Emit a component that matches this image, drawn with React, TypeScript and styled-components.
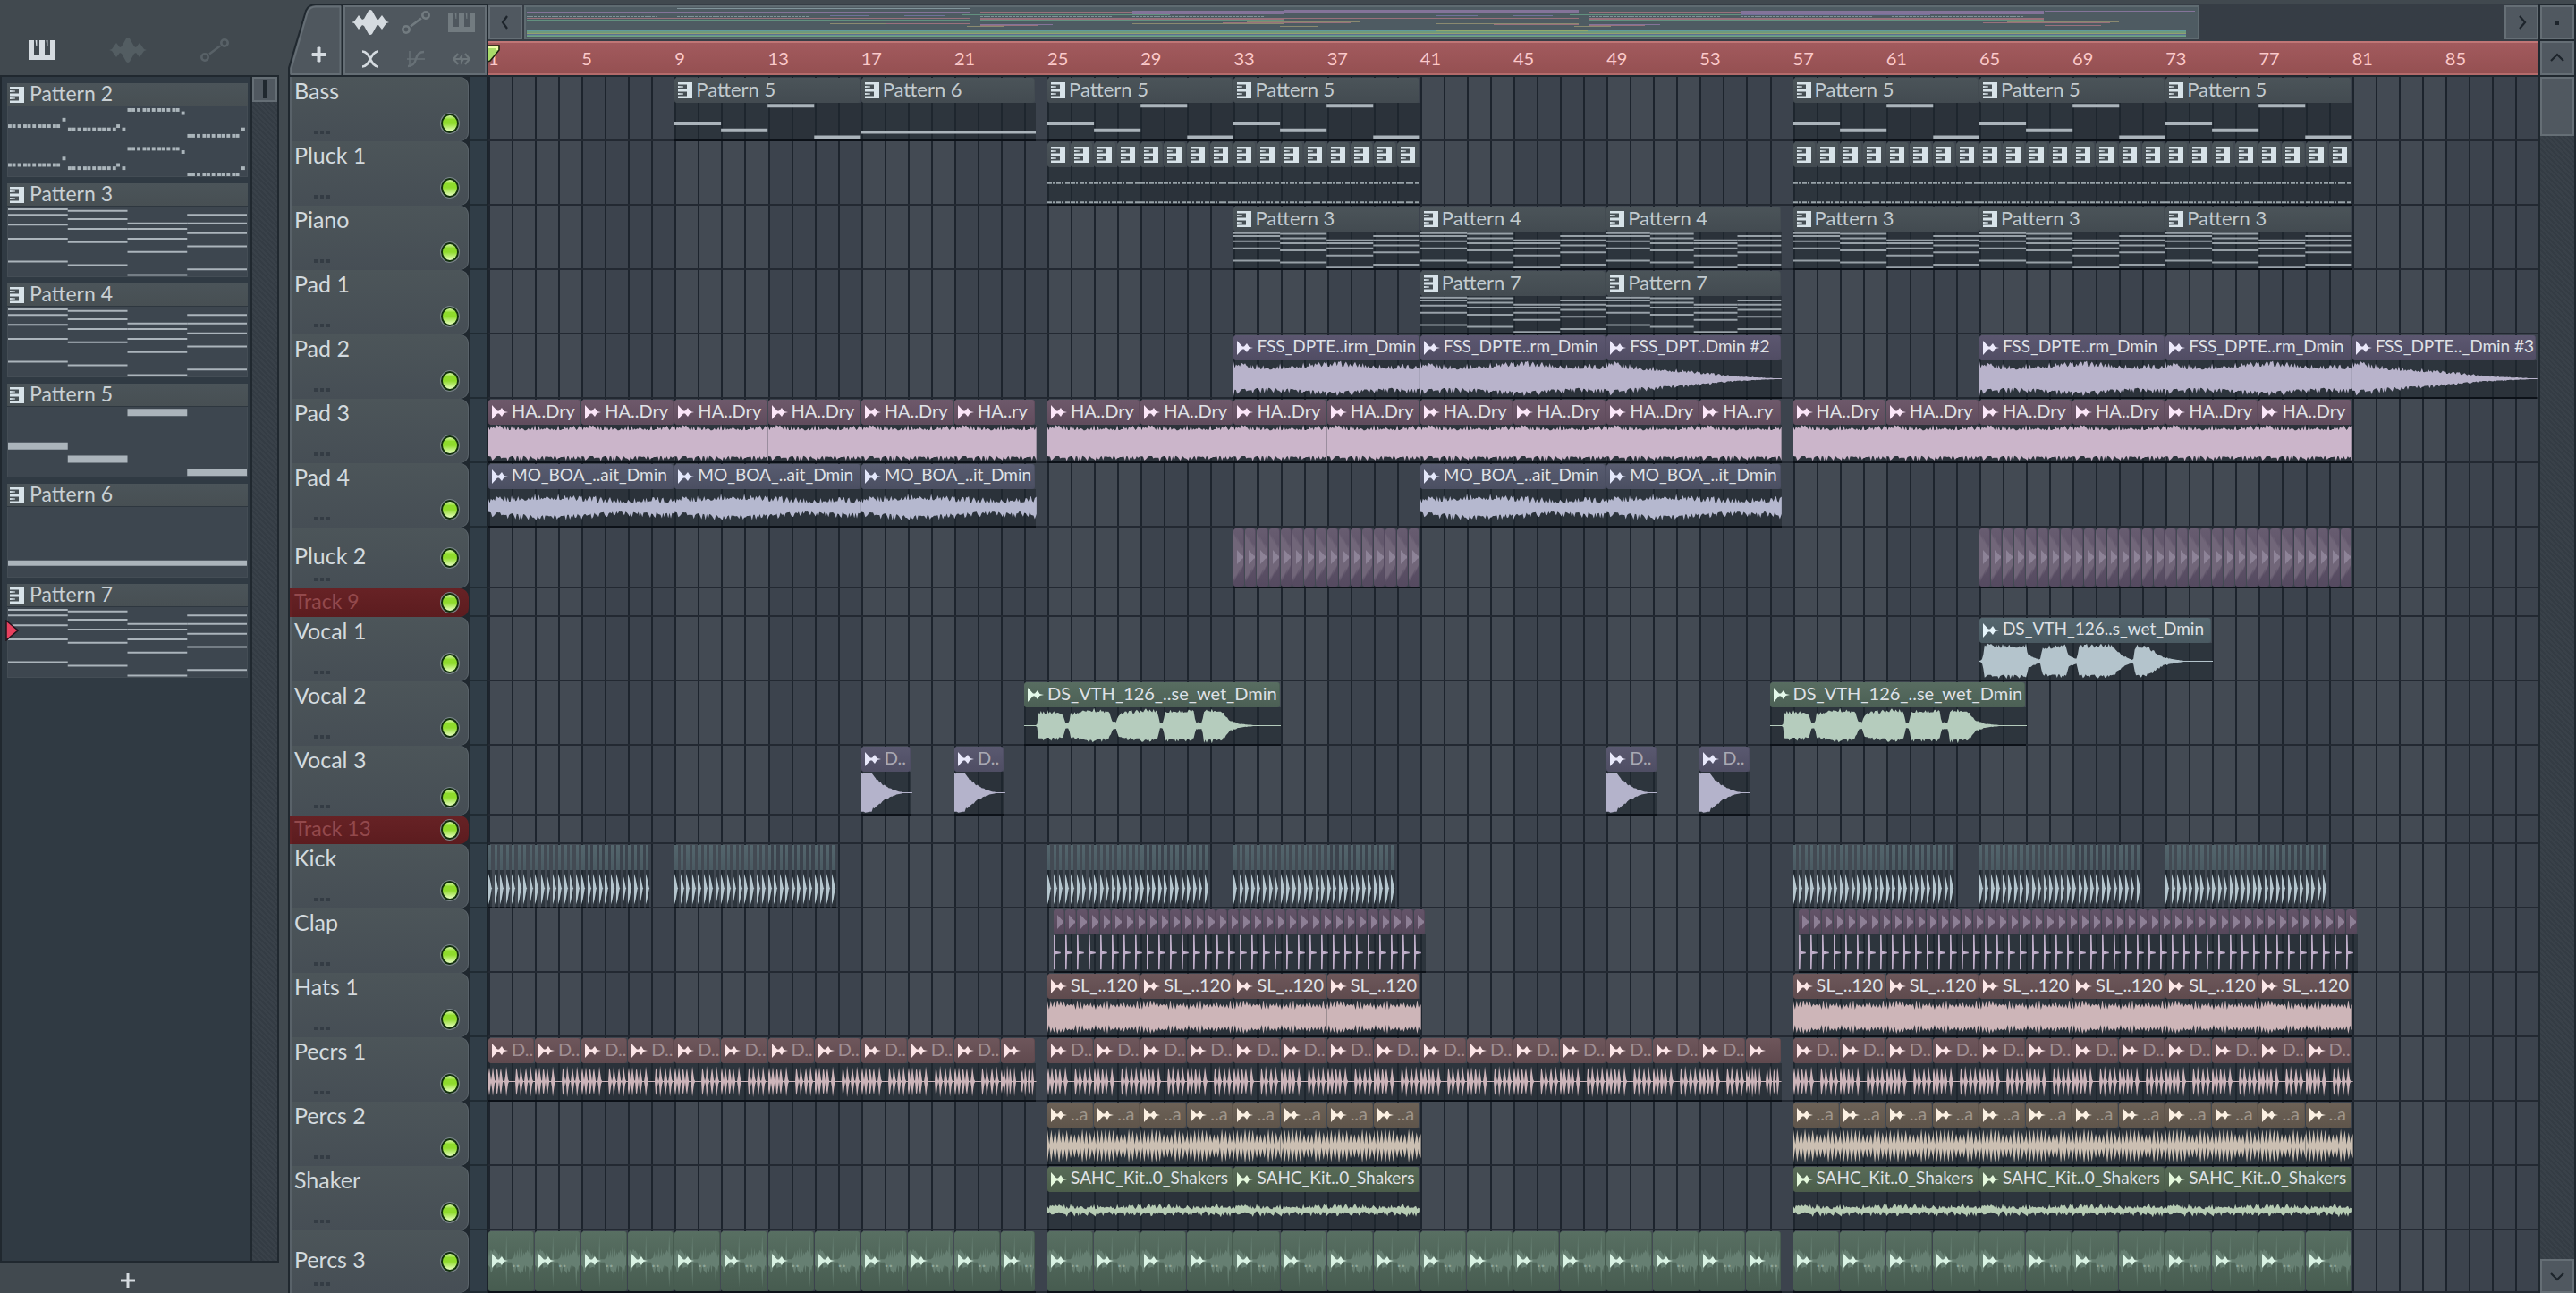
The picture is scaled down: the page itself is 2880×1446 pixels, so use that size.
import React from "react";
import styled, { createGlobalStyle, css } from "styled-components";

const BARS = 88;
const DIV = 12;
const COLS = BARS * DIV;

const Global = createGlobalStyle`
  *, *::before, *::after { box-sizing: border-box; }
  html, body, #root { margin: 0; height: 100%; }
  body {
    background: #20282f;
    font-family: Lato, "Open Sans", "Liberation Sans", sans-serif;
    color: #d3dade;
    overflow: hidden;
  }
  button { font: inherit; color: inherit; border: 0; padding: 0; background: none; }
`;

/* ---------- shared pieces ---------- */

const hatch = css`
  background: repeating-linear-gradient(45deg, #343c44 0 2px, #394149 2px 4px);
`;

const BevelButton = styled.button`
  flex: none;
  width: 38px;
  height: 38px;
  display: grid;
  place-items: center;
  background: #505860;
  border: 2px solid #656e75;
  color: #1d242b;
`;

const Chevron = ({ d }: { d: string }) => (
  <svg width="20" height="20" viewBox="0 0 20 20" fill="none" stroke="currentColor" strokeWidth="2.2">
    <path d={d} />
  </svg>
);

const WaveIcon = () => (
  <svg width="42" height="28" viewBox="0 0 42 28" fill="currentColor">
    <path d="M0 14 L3 13 L8 6 L12 11 L14 10 L19 1 Q21 -1 23 1 L28 10 L30 11 L34 6 L39 13 L42 14 L39 15 L34 22 L30 17 L28 18 L23 27 Q21 29 19 27 L14 18 L12 17 L8 22 L3 15 Z" />
  </svg>
);
const LinkIcon = () => (
  <svg width="32" height="26" viewBox="0 0 32 26" fill="none" stroke="currentColor" strokeWidth="2.6">
    <circle cx="5" cy="21" r="3.7" />
    <circle cx="27" cy="5" r="3.7" />
    <path d="M10 17.5 L22 8.5" />
  </svg>
);
const PianoIcon = () => (
  <svg width="30" height="22" viewBox="0 0 30 22" fill="currentColor">
    <path d="M0 0H6V16H12V0H18V16H24V0H30V22H0Z" />
    <path d="M7.600 0H9.400V7H8.400Z M19.600 0H21.400V7H20.400Z" />
  </svg>
);
const CrossIcon = () => (
  <svg width="20" height="20" viewBox="0 0 20 20" fill="none" stroke="currentColor" strokeWidth="2.600">
    <path d="M1 1.500 C6 1.500 8 6 10 10 C12 14 14 18.500 19 18.500 M19 1.500 C14 1.500 12 6 10 10 C8 14 6 18.500 1 18.500" />
  </svg>
);
const CurveIcon = () => (
  <svg width="20" height="20" viewBox="0 0 20 20" fill="none" stroke="currentColor" strokeWidth="1.500">
    <path d="M3 1V19 M0 10H20" />
    <path d="M1 18 Q8 18 10 10 Q12 2 19 2" strokeWidth="2.400" />
  </svg>
);
const StretchIcon = () => (
  <svg width="20" height="14" viewBox="0 0 20 14" fill="none" stroke="currentColor" strokeWidth="2.200">
    <path d="M6 1 L1 7 L6 13 M14 1 L19 7 L14 13 M2 7H8 L10 4 L10 10 L12 7H18" />
  </svg>
);
const KeysIcon = () => (
  <svg width="16" height="18" viewBox="0 0 16 18" fill="#d8e3e9">
    <path d="M0 0H16V18H0V15.500H10V10.500H0V7.500H10V2.500H0Z" />
    <path d="M0 4L6 4.500V5.500L0 6Z M0 12L6 12.500V13.500L0 14Z" />
  </svg>
);
const FishIcon = ({ color }: { color: string }) => (
  <svg width="18" height="16" viewBox="0 0 18 16" fill={color}>
    <path d="M0 0V16L6 9.500H8L11 13L13.500 9L18 8L13.500 7L11 3L8 6.500H6Z" />
  </svg>
);

/* ---------- note data ---------- */

type Note = [number, number, number];

const chords: Note[] = [
  [4, 12, 26, 46, 79],
  [6, 18, 32, 51, 84],
  [24, 32, 46, 65, 98],
  [12, 24, 38, 57, 90],
].flatMap((ys, c) => ys.map((y): Note => [c * 25, y, 25]));

const bassNotes: Note[] = [
  [0, 56, 25],
  [25, 75, 25],
  [50, 8, 25],
  [75, 94, 25],
];

const beat = [0, 13, 30, 48, 61, 77, 95, 108, 124, 141, 153];
const arpDots: [number, number][] = [0, 132].flatMap((dy) => [
  ...beat.map((x): [number, number] => [x, 67 + dy]),
  [171, 45 + dy] as [number, number],
  ...beat.slice(0, 10).map((x): [number, number] => [x + 189, 78 + dy]),
  [342, 67 + dy] as [number, number],
  [360, 78 + dy] as [number, number],
  ...beat.map((x): [number, number] => [x + 377, dy ? 144 : 12]),
  [547, dy ? 155 : 23] as [number, number],
  ...beat.map((x): [number, number] => [x + 566, 100 + dy]),
  [737, 78 + dy] as [number, number],
]);

const Drawing = styled.svg`
  display: block;
  width: 100%;
  height: 100%;
`;

function Notes({ pattern, small }: { pattern: number; small?: boolean }) {
  if (pattern === 2 && !small)
    return (
      <Drawing viewBox="0 0 754 237" preserveAspectRatio="none" fill="#abb5bb">
        {arpDots.map(([x, y], i) => (
          <rect key={i} x={x} y={y - 6} width="11" height="12" />
        ))}
      </Drawing>
    );
  if (pattern === 2)
    return (
      <Drawing viewBox="0 0 26 100" preserveAspectRatio="none" stroke="#98a2a8" strokeWidth="2" strokeDasharray="5 1 2 2">
        <path d="M0 43H26 M0 96H26" vectorEffect="non-scaling-stroke" />
      </Drawing>
    );
  const list = pattern === 5 ? bassNotes : pattern === 6 ? ([[0, 80.5, 100]] as Note[]) : chords;
  const thick = list === chords ? 2 : small ? (pattern === 6 ? 3 : 4) : pattern === 6 ? 6 : 8;
  return (
    <Drawing
      viewBox="0 0 100 100"
      preserveAspectRatio="none"
      stroke={small && list === chords ? "#98a1a8" : "#abb4bb"}
      strokeWidth={thick}
    >
      {list.map(([x, y, w], i) => (
        <path key={i} d={`M${x} ${y}H${x + w}`} vectorEffect="non-scaling-stroke" />
      ))}
    </Drawing>
  );
}

/* ---------- waveforms ---------- */

type WaveKind =
  | "dense" | "swell" | "fade" | "soft" | "hats" | "burst" | "ticks"
  | "shaker" | "kick" | "clap" | "tail" | "vocalA" | "vocalB" | "ghost" | "pluck";

const noise = (i: number) => {
  const s = Math.sin(i * 127.1 + 311.7) * 43758.5453;
  return s - Math.floor(s);
};
const interp = (pts: number[][], t: number) => {
  for (let i = 1; i < pts.length; i++)
    if (t <= pts[i][0]) {
      const [a, va] = pts[i - 1];
      const [b, vb] = pts[i];
      return va + ((vb - va) * (t - a)) / (b - a || 1);
    }
  return pts[pts.length - 1][1];
};
const vocalA = [[0, 0.02], [0.015, 0.15], [0.02, 0.95], [0.2, 0.95], [0.21, 0.4], [0.26, 0.08], [0.27, 0.85], [0.37, 0.95], [0.385, 0.3], [0.42, 0.15], [0.425, 0.9], [0.57, 0.98], [0.61, 0.4], [0.66, 0.06], [0.67, 0.98], [0.72, 0.85], [0.79, 0.25], [0.88, 0.02], [1, 0.02]];
const vocalB = [[0, 0.02], [0.05, 0.02], [0.055, 0.8], [0.1, 0.85], [0.15, 0.8], [0.16, 0.2], [0.175, 0.15], [0.18, 0.7], [0.25, 1], [0.33, 0.85], [0.345, 0.25], [0.36, 0.2], [0.37, 0.75], [0.48, 0.95], [0.52, 0.9], [0.53, 0.15], [0.543, 0.2], [0.55, 0.9], [0.66, 0.9], [0.67, 0.2], [0.695, 0.2], [0.7, 0.95], [0.77, 0.95], [0.8, 0.35], [0.84, 0.12], [0.9, 0.02], [1, 0.02]];
const burstHits = [0.012, 0.09, 0.18, 0.26, 0.38, 0.6, 0.69, 0.8, 0.9];

function level(kind: WaveKind, t: number, i: number): number {
  const n = noise(i);
  const spike = n * n;
  switch (kind) {
    case "dense":
      return 0.7 + spike * 0.3;
    case "swell":
      return t < 0.006 ? 0.95 : 0.58 + 0.08 * Math.sin(t * 9 + 3) + spike * 0.32;
    case "fade":
      return Math.max(0.02, (0.58 + spike * 0.36) * interp([[0, 1.1], [0.2, 0.8], [0.45, 0.55], [0.7, 0.22], [1, 0.01]], t));
    case "soft":
      return 0.32 + 0.1 * Math.sin(t * 8 - 1) + spike * 0.36 - (t > 0.9 ? 0.1 : 0);
    case "hats":
      return i % 2 ? 0.4 + n * 0.25 : 0.72 + spike * 0.2;
    case "burst": {
      let v = 0.03;
      burstHits.forEach((h) => {
        const d = t - h;
        const w = d < 0 ? 0.022 : 0.05;
        v = Math.max(v, 0.9 * (1 - Math.abs(d) / w));
      });
      return v;
    }
    case "ticks":
      return i % 2 ? 0.08 + n * 0.1 : 0.6 + n * 0.35;
    case "shaker":
      return 0.04 + 0.1 * Math.abs(Math.sin(i * 0.42)) + spike * 0.24;
    case "tail":
      return t < 0.22 ? 0.9 + spike * 0.06 : Math.max(0.02, 0.95 * Math.pow(Math.max(0, 1 - (t - 0.18) / 0.8), 2.2) * (0.85 + n * 0.2));
    case "vocalA": {
      const v = interp(vocalA, t);
      return v < 0.05 ? v : v * (0.78 + spike * 0.25);
    }
    case "vocalB": {
      const v = interp(vocalB, t);
      return v < 0.05 ? v : v * (0.78 + spike * 0.24);
    }
    case "pluck":
      return 0.75 - t * 0.5 + (i % 2) * 0.15;
    case "ghost":
      return Math.abs(t - 0.4) < 0.012 || Math.abs(t - 0.92) < 0.012
        ? 0.9
        : t < 0.3
          ? 0.1 + n * 0.4 * (1 - t * 2)
          : t > 0.52
            ? 0.08 + n * 0.4
            : 0.05;
    default:
      return 0;
  }
}

const samplesPerBar: Partial<Record<WaveKind, number>> = { burst: 26, ghost: 26, hats: 14, ticks: 12 };

const cache: Record<string, string> = {};
function wavePath(kind: WaveKind, bars: number): string {
  const key = kind + bars;
  if (cache[key]) return cache[key];
  if (kind === "kick") return (cache[key] = "M0 10 L35 22 L85 48 L100 50 L85 52 L35 82 L0 94Z");
  if (kind === "clap") return (cache[key] = "M0 2 L12 2 L16 46 L60 48 V52 L16 54 L12 96 L0 96Z");
  const count = Math.round(bars * (samplesPerBar[kind] ?? 18));
  let top = "";
  let bottom = "";
  for (let i = 0; i <= count; i++) {
    const t = i / count;
    /* the last sample reaches past the edge so that joined clips leave no seam */
    const x = i === count ? (100 + 2 / bars).toFixed(2) : (t * 100).toFixed(2);
    const j = kind === "burst" || kind === "ticks" || kind === "hats" ? i : i + 977;
    top += `L${x} ${(50 - level(kind, t, i) * 50).toFixed(1)}`;
    bottom = `L${x} ${(50 + level(kind, t, j) * 50).toFixed(1)}` + bottom;
  }
  return (cache[key] = "M0 50" + top + bottom + "Z");
}

const SpillDrawing = styled(Drawing)`
  overflow: visible;
`;

const Wave = ({ kind, bars, color }: { kind: WaveKind; bars: number; color: string }) => (
  <SpillDrawing viewBox="0 0 100 100" preserveAspectRatio="none" fill={color}>
    <path d={wavePath(kind, bars)} />
  </SpillDrawing>
);

/* ---------- track data ---------- */

type Tone = { top: string; low: string; wave: string; icon: string; text: string };
const tone = (top: string, low: string, wave: string, icon: string, text = "#dfe1e6"): Tone => ({ top, low, wave, icon, text });

const T = {
  pattern: tone("#4b5459", "#434b51", "#abb4bb", "#d8e3e9", "#c3cbcf"),
  fss: tone("#5c5770", "#514d64", "#b8b3cb", "#ebe8fa"),
  ha: tone("#6e596b", "#604c5d", "#cbb5ca", "#fbe6f8"),
  mo: tone("#585c70", "#4b4f62", "#b5b8cf", "#e4e8fb"),
  pluck: tone("#675c70", "#554a60", "#716679", "#8d8397"),
  v1: tone("#55676f", "#4a5a62", "#b4c4cc", "#e6f4fa"),
  v2: tone("#586d61", "#4c6055", "#b5ccbd", "#e4f8ea"),
  v3: tone("#5a5970", "#4f4e64", "#b4b3cb", "#e8e8fa", "#a9a9b4"),
  kick: tone("#54666d", "#4a5a62", "#b5c6ce", "#b5c6ce"),
  clap: tone("#645469", "#56485b", "#bfaec9", "#8d7f95"),
  hats: tone("#6d575a", "#5f4b4e", "#cdb5b8", "#fbe6e6"),
  percs: tone("#6e565b", "#604a4f", "#cdb5ba", "#fbe4e6", "#a08f94"),
  percs2: tone("#6d6257", "#5f554b", "#cbbfb2", "#fbf0e2", "#9f968c"),
  shaker: tone("#586b57", "#4c5e4b", "#b7ccb4", "#e4f8dc"),
  percs3: tone("#586f62", "#475c50", "#667f72", "#d9f2e3", "#8fa69a"),
};

type ClipData = {
  at: number;
  len: number;
  tone: Tone;
  label?: string;
  pattern?: number;
  wave?: WaveKind;
  size?: number;
};

const pat = (n: number, ats: number[], len = 8): ClipData[] =>
  ats.map((at) => ({ at, len, tone: T.pattern, pattern: n, label: `Pattern ${n}`, size: 22 }));
const series = (from: number, to: number, step: number, make: (at: number, len: number) => Omit<ClipData, "at" | "len">, len?: number) => {
  const out: ClipData[] = [];
  for (let at = from; at < to - 0.01; at += step) {
    const l = Math.min(len ?? step, to - at);
    out.push({ at, len: l, ...make(at, l) });
  }
  return out;
};
const audio = (t: Tone, wave: WaveKind, label?: string) => (_at: number, _len: number) => ({ tone: t, wave, label });

const ha = (_at: number, len: number) => ({ tone: T.ha, wave: "dense" as WaveKind, label: len < 4 ? "HA..ry" : "HA..Dry" });
const mo = (_at: number, len: number) => ({ tone: T.mo, wave: "soft" as WaveKind, label: len < 8 ? "MO_BOA_..it_Dmin" : "MO_BOA_..ait_Dmin", size: 19 });
const fss = (at: number, len: number, label: string, wave: WaveKind = "swell"): ClipData => ({ at, len, tone: T.fss, wave, label, size: 19 });
const percs1 = (_at: number, len: number) => ({ tone: T.percs, wave: "burst" as WaveKind, label: len < 2 ? "" : "D.." });
const percs3 = (_at: number, _len: number) => ({ tone: T.percs3, wave: "ghost" as WaveKind, label: ".." });
const kick = audio(T.kick, "kick");
const clap = audio(T.clap, "clap");

type Track = { name: string; height: number; kind?: "solid" | "muted"; clips: ClipData[] };

const tracks: Track[] = [
  { name: "Bass", height: 72, clips: [...pat(5, [9]), ...pat(6, [17], 7.5), ...pat(5, [25, 33, 57, 65, 73])] },
  { name: "Pluck 1", height: 72, clips: [[25, 41], [57, 81]].flatMap(([a, b]) => series(a, b, 1, () => ({ tone: T.pattern, pattern: 2 }))) },
  { name: "Piano", height: 72, clips: [...pat(3, [33]), ...pat(4, [41]), ...pat(4, [49], 7.5), ...pat(3, [57, 65, 73])] },
  { name: "Pad 1", height: 72, clips: [...pat(7, [41]), ...pat(7, [49], 7.5)] },
  {
    name: "Pad 2", height: 72,
    clips: [
      fss(33, 8, "FSS_DPTE..irm_Dmin"), fss(41, 8, "FSS_DPTE..rm_Dmin"), fss(49, 7.5, "FSS_DPT..Dmin #2", "fade"),
      fss(65, 8, "FSS_DPTE..rm_Dmin"), fss(73, 8, "FSS_DPTE..rm_Dmin"), fss(81, 95 / 12, "FSS_DPTE.._Dmin #3", "fade"),
    ],
  },
  { name: "Pad 3", height: 72, clips: [...series(1, 24.5, 4, ha), ...series(25, 56.5, 4, ha), ...series(57, 81, 4, ha)] },
  { name: "Pad 4", height: 72, clips: [...series(1, 24.5, 8, mo), ...series(41, 56.5, 8, mo)] },
  { name: "Pluck 2", height: 68, kind: "solid", clips: [[33, 41], [65, 81]].flatMap(([a, b]) => series(a, b, 0.5, audio(T.pluck, "pluck"))) },
  { name: "Track 9", height: 32, kind: "muted", clips: [] },
  { name: "Vocal 1", height: 72, clips: [{ at: 65, len: 10, tone: T.v1, wave: "vocalA", label: "DS_VTH_126..s_wet_Dmin", size: 19 }] },
  { name: "Vocal 2", height: 72, clips: [24, 56].map((at) => ({ at, len: 11, tone: T.v2, wave: "vocalB" as WaveKind, label: "DS_VTH_126_..se_wet_Dmin" })) },
  { name: "Vocal 3", height: 78, clips: [17, 21, 49, 53].map((at) => ({ at, len: 26 / 12, tone: T.v3, wave: "tail" as WaveKind, label: "D.." })) },
  { name: "Track 13", height: 32, kind: "muted", clips: [] },
  { name: "Kick", height: 72, clips: [1, 9, 25, 33, 57, 65, 73].flatMap((a) => series(a, a + 7, 0.25, kick, 2 / 12)) },
  { name: "Clap", height: 72, clips: [25.25, 57.25].flatMap((a, i) => series(a, i ? a + 24 : a + 16, 0.5, clap)) },
  { name: "Hats 1", height: 72, clips: [[25, 41], [57, 81]].flatMap(([a, b]) => series(a, b, 4, audio(T.hats, "hats", "SL_..120"))) },
  { name: "Pecrs 1", height: 72, clips: [...series(1, 24.5, 2, percs1), ...series(25, 56.5, 2, percs1), ...series(57, 81, 2, percs1)] },
  { name: "Percs 2", height: 72, clips: [[25, 41], [57, 81]].flatMap(([a, b]) => series(a, b, 2, audio(T.percs2, "ticks", "..a"))) },
  {
    name: "Shaker", height: 72,
    clips: [[25, 41], [57, 81]].flatMap(([a, b]) => series(a, b, 8, () => ({ tone: T.shaker, wave: "shaker" as WaveKind, label: "SAHC_Kit..0_Shakers", size: 19 }))),
  },
  { name: "Percs 3", height: 70, kind: "solid", clips: [...series(1, 24.5, 2, percs3), ...series(25, 56.5, 2, percs3), ...series(57, 81, 2, percs3)] },
];

/* ---------- page frame ---------- */

const Page = styled.div`
  display: flex;
  height: 100vh;
  overflow: hidden;
`;

const Sidebar = styled.aside`
  flex: none;
  width: 322px;
  padding-right: 10px;
  display: flex;
  flex-direction: column;
  background: #41494f;
`;
const PickerTabs = styled.div`
  height: 84px;
  padding: 28px 56px 0 32px;
  display: flex;
  align-items: center;
  justify-content: space-between;
`;
const IconButton = styled.button<{ $dim?: string }>`
  display: grid;
  place-items: center;
  color: ${(p) => p.$dim || "#d5dbe0"};
`;
const Picker = styled.div`
  flex: 1;
  min-height: 0;
  display: flex;
  border: 2px solid #20282f;
`;
const PatternList = styled.ul`
  flex: 1;
  margin: 0;
  padding: 7px 3px 0 6px;
  list-style: none;
  display: flex;
  flex-direction: column;
  gap: 7px;
  background: #303a43;
  border-right: 2px solid #20282f;
`;
const PatternItem = styled.li`
  position: relative;
`;
const PatternButton = styled.button`
  display: flex;
  flex-direction: column;
  width: 100%;
`;
const PatternHead = styled.span`
  display: flex;
  align-items: center;
  gap: 6px;
  width: 100%;
  height: 26px;
  padding: 0 3px;
  background: linear-gradient(#4b5459, #474f53);
  border-bottom: 1px solid #2e373f;
`;
const PatternName = styled.span`
  padding-bottom: 3px;
  font-size: 23px;
  line-height: 22px;
  color: #c9d0d4;
`;
const PatternBody = styled.span`
  display: block;
  width: 100%;
  height: 79px;
  background: #3d464f;
  border: 1px solid #444d55;
  border-top: 0;
`;
const Marker = styled.svg`
  position: absolute;
  left: -2px;
  top: 40px;
`;
const SideScroll = styled.div`
  width: 28px;
  ${hatch}
`;
const SideThumb = styled.button`
  display: grid;
  place-items: center;
  width: 28px;
  height: 28px;
  border: 2px solid #656e75;
  background: #505860;
`;
const ThumbMark = styled.span`
  width: 4px;
  height: 20px;
  background: #20282f;
`;
const AddRow = styled.div`
  height: 34px;
  display: grid;
  place-items: center;
  padding: 6px 26px 0 0;
`;

const Playlist = styled.main`
  flex: 1;
  min-width: 0;
  display: flex;
  flex-direction: column;
  border-left: 2px solid #20282f;
`;
const Toolbar = styled.header`
  display: flex;
  gap: 2px;
  height: 86px;
  border-top: 4px solid #41494f;
  padding-bottom: 2px;
  margin-left: -2px;
`;
const AddTrack = styled.button`
  flex: none;
  width: 60px;
  background: #41494f;
`;
const TabShape = styled.svg`
  display: block;
`;
const Tools = styled.div`
  flex: none;
  width: 160px;
  margin-top: 2px;
  padding: 0 1px 0 3px;
  display: grid;
  grid-template-columns: 1fr 1fr 1fr;
  grid-template-rows: 34px 32px;
  row-gap: 8px;
  background: #4f575e;
  border: 2px solid #656e75;
`;
const Timeline = styled.div`
  flex: 1;
  min-width: 0;
  display: flex;
  flex-direction: column;
`;
const ScrollRow = styled.div`
  display: flex;
  height: 42px;
  padding: 2px 0;
  background: #363d45;
`;
const Track = styled.div`
  flex: 1;
  min-width: 0;
  display: grid;
  grid-template-columns: 11fr 2fr;
  padding-left: 2px;
`;
const MapThumb = styled.div`
  height: 38px;
  padding: 1px;
  border: 2px solid #5f6b71;
  background: #4e5b62;
`;
const Ruler = styled.div`
  position: relative;
  height: 38px;
  display: grid;
  grid-template-columns: repeat(22, minmax(0, 1fr));
  align-items: center;
  border-top: 2px solid #c07676;
  border-bottom: 2px solid #b56b6b;
  background: linear-gradient(#a25a5d, #955052);
  font-size: 20px;
  line-height: 24px;
  color: #fbc9ca;
`;
const Playhead = styled.svg`
  position: absolute;
  left: 0;
  top: 2px;
`;
const Corner = styled.div`
  flex: none;
  display: flex;
  flex-direction: column;
  gap: 2px;
  padding: 2px 2px 0 0;
`;
const Dot = styled.span`
  width: 4px;
  height: 5px;
  background: #1d242b;
`;

const Content = styled.div`
  flex: 1;
  min-height: 0;
  display: flex;
  gap: 2px;
  padding-right: 2px;
`;
const Rows = styled.div`
  flex: 1;
  min-width: 0;
  overflow: hidden;
`;
const VScroll = styled.div`
  flex: none;
  width: 38px;
  display: flex;
  flex-direction: column;
  justify-content: space-between;
  ${hatch}
`;
const VThumb = styled.button`
  height: 66px;
  background: #505860;
  border: 2px solid #656e75;
`;

const Row = styled.div<{ $h: number }>`
  display: flex;
  height: ${(p) => p.$h}px;
`;
const Head = styled.div<{ $kind?: string }>`
  flex: none;
  width: 200px;
  margin-right: 2px;
  padding: 0 11px 0 3px;
  display: grid;
  grid-template-columns: 1fr 20px;
  grid-template-rows: ${(p) => (p.$kind === "muted" ? "1fr" : "1fr 14px")};
  border-left: 2px solid #596269;
  border-radius: 0 10px 10px 0;
  box-shadow: inset -1px 0 #596269;
  background: linear-gradient(#4c5559, #464e55);
  ${(p) =>
    p.$kind === "muted" &&
    css`
      border-left-color: #672023;
      box-shadow: none;
      background: linear-gradient(#672225, #5c1c1f);
    `}
`;
const TrackName = styled.label<{ $kind?: string }>`
  grid-column: 1;
  grid-row: ${(p) => (p.$kind ? "1 / -1" : "1")};
  align-self: ${(p) => (p.$kind === "solid" ? "center" : "start")};
  padding-bottom: ${(p) => (p.$kind === "solid" ? 6 : 0)}px;
  font-size: ${(p) => (p.$kind === "muted" ? 23 : 25)}px;
  line-height: ${(p) => (p.$kind === "muted" ? 28 : 30)}px;
  white-space: nowrap;
  color: ${(p) => (p.$kind === "muted" ? "#93494c" : "#d3dade")};
`;
const Dots = styled.span`
  grid-column: 1;
  grid-row: 2;
  width: 19px;
  height: 4px;
  margin: 2px 0 0 22px;
  background: repeating-linear-gradient(90deg, #343c44 0 4px, transparent 4px 7px);
`;
const Led = styled.input<{ $kind?: string }>`
  appearance: none;
  grid-column: 2;
  grid-row: 1 / -1;
  align-self: ${(p) => (p.$kind ? "center" : "end")};
  margin: ${(p) => (p.$kind ? "0" : "0 0 9px")};
  width: 20px;
  height: 22px;
  border-radius: 50%;
  border: 2px solid #12300c;
  outline: 1px solid #7c868b;
  background: linear-gradient(#d8f7a8, #8fdb2c 25%, #8fdb2c 50%, #e8ffc0);
`;
const Gutter = styled.div`
  flex: none;
  width: 20px;
  background: #303d47;
  border-right: 2px solid #1b232a;
  border-bottom: 2px solid #202b33;
`;
const Lane = styled.div`
  flex: 1;
  min-width: 0;
  display: grid;
  grid-template-columns: repeat(${COLS}, minmax(0, 1fr));
  grid-template-rows: 100%;
  background:
    linear-gradient(#232932, #232932) 0 100% / 100% 2px no-repeat,
    repeating-linear-gradient(90deg, #1d242d 0 2px, transparent 2px calc(100% / 88)),
    repeating-linear-gradient(90deg, #434a53 0 calc(100% / 22), #3c434d calc(100% / 22) calc(100% / 11));
`;

const ClipBox = styled.div`
  grid-row: 1;
  min-width: 0;
  display: flex;
  flex-direction: column;
  padding-top: 1px;
  border-bottom: 2px solid #0c1118;
`;
const ClipHead = styled.div<{ $t: Tone; $fill?: boolean; $plain?: boolean }>`
  position: relative;
  flex: ${(p) => (p.$fill ? "1" : "0 0 28px")};
  min-width: 0;
  overflow: hidden;
  display: flex;
  align-items: center;
  gap: 4px;
  padding-left: ${(p) => (p.$plain ? 0 : 4)}px;
  margin-right: 1px;
  border-radius: ${(p) => (p.$plain ? 0 : 3)}px;
  border: solid ${(p) => p.$t.low};
  border-width: ${(p) => (p.$plain ? "0" : "0 1px 1px 0")};
  background: linear-gradient(${(p) => p.$t.top}, ${(p) => p.$t.low});

  & > svg {
    position: relative;
    z-index: 1;
    flex: none;
  }
`;
const ClipLabel = styled.span<{ $c: string; $size: number }>`
  position: relative;
  z-index: 1;
  min-width: 0;
  padding-bottom: ${(p) => (p.$size > 20 ? 1 : 3)}px;
  white-space: nowrap;
  font-size: ${(p) => p.$size}px;
  line-height: 24px;
  color: ${(p) => p.$c};
`;
const ClipBody = styled.div`
  flex: 1;
  min-height: 0;
  background: rgba(32, 40, 46, 0.6);
`;
const Ghost = styled.div`
  position: absolute;
  inset: 0;
`;

function Clip({ clip, fill }: { clip: ClipData; fill?: boolean }) {
  const { at, len, tone: t, label, pattern, wave, size } = clip;
  const plain = wave === "kick";
  const start = Math.round((at - 1) * DIV) + 1;
  return (
    <ClipBox style={{ gridColumn: `${start} / span ${Math.round(len * DIV)}` }}>
      <ClipHead $t={t} $fill={fill} $plain={plain}>
        {fill && (
          <Ghost>
            <Wave kind={wave!} bars={wave === "pluck" ? 1 : len} color={t.wave} />
          </Ghost>
        )}
        {pattern ? <KeysIcon /> : !plain && <FishIcon color={t.icon} />}
        {label && (
          <ClipLabel $c={t.text} $size={size ?? 20}>
            {label}
          </ClipLabel>
        )}
      </ClipHead>
      {!fill && (
        <ClipBody>
          {pattern ? <Notes pattern={pattern} small /> : <Wave kind={wave!} bars={len} color={t.wave} />}
        </ClipBody>
      )}
    </ClipBox>
  );
}

/* ---------- overview strip ---------- */

const P = "#84749a", R = "#99717c", G = "#62917f", O = "#8a8a70", V = "#71719a", D = "#82959b";
type Seg = [number, number, number, number, string];
const mapSegs: Seg[] = [
  [756, 1085, 0, 1, D], [588, 1085, 4, 2, P], [1096, 1266, 4, 2, R], [1266, 1436, 3, 4, P], [1436, 1766, 2, 4, P],
  [1777, 1947, 4, 1, R], [1947, 2286, 3, 4, P], [2287, 2456, 3, 1, P],
  [927, 972, 8, 2, V], [1011, 1057, 8, 2, V], [1075, 1308, 7, 2, G], [1606, 1652, 8, 2, V], [1692, 1737, 8, 2, V],
  [1756, 1990, 7, 2, G], [1947, 2159, 7, 1, V],
  [588, 1085, 12, 1, R], [588, 1085, 14, 2, G], [1096, 1436, 12, 2, R], [1096, 1436, 14, 2, G], [1436, 1766, 12, 1, R],
  [1777, 2286, 12, 2, R], [1777, 2286, 14, 2, G],
  [927, 1085, 18, 1, O], [990, 1085, 18, 1, R], [1096, 1177, 19, 1, P], [1096, 1160, 20, 1, R], [1081, 1122, 21, 1, O],
  [1266, 1436, 18, 1, O], [1367, 1510, 17, 1, R], [1394, 1521, 16, 1, O], [1431, 1473, 21, 1, O],
  [1606, 1766, 18, 1, O], [1671, 1766, 19, 1, R], [1777, 1857, 19, 1, P], [1777, 1840, 20, 1, R], [1761, 1802, 21, 1, O],
  [2245, 2371, 16, 1, O], [2218, 2360, 17, 1, R], [2287, 2350, 20, 1, R],
  [588, 2446, 25, 2, "#74709a"], [588, 2446, 27, 1, "#63999a"], [588, 2446, 28, 2, "#6d9a7c"], [588, 2446, 30, 1, "#92a070"],
  [588, 2446, 31, 1, "#5c6f90"], [588, 2446, 32, 1, "#66938f"], [588, 2446, 33, 1, "#6fa37f"], [1606, 1776, 26, 2, "#8fa870"],
];
const mapDashes: [number, number][] = [[588, 733], [756, 904], [1096, 1244], [1266, 1413], [1777, 1925], [1947, 2094], [2116, 2264]];

const Overview = () => (
  <Drawing viewBox="588 0 1870 34" preserveAspectRatio="none" shapeRendering="crispEdges">
    {mapSegs.map(([a, b, y, h, c], i) => (
      <rect key={i} x={a} y={y} width={b - a} height={h} fill={c} />
    ))}
    {mapDashes.map(([a, b]) => (
      <path key={a} d={`M${a} 10.500H${b}`} stroke={D} strokeDasharray="3 1" />
    ))}
  </Drawing>
);

const Plus = ({ size }: { size: number }) => (
  <svg width={size} height={size} viewBox="0 0 16 16" fill="#d5dbe0">
    <path d="M6.500 0H9.500V6.500H16V9.500H9.500V16H6.500V9.500H0V6.500H6.500Z" />
  </svg>
);

export default function App() {
  return (
    <Page>
      <Global />
      <Sidebar>
        <PickerTabs>
          <IconButton aria-label="Patterns"><PianoIcon /></IconButton>
          <IconButton aria-label="Audio clips" $dim="#535d62"><WaveIcon /></IconButton>
          <IconButton aria-label="Automation clips" $dim="#586167"><LinkIcon /></IconButton>
        </PickerTabs>
        <Picker>
          <PatternList>
            {[2, 3, 4, 5, 6, 7].map((n) => (
              <PatternItem key={n}>
                <PatternButton>
                  <PatternHead><KeysIcon /><PatternName>Pattern {n}</PatternName></PatternHead>
                  <PatternBody><Notes pattern={n} /></PatternBody>
                </PatternButton>
                {n === 7 && (
                  <Marker width="15" height="24" viewBox="0 0 15 24">
                    <path d="M1 1L14 12L1 23Z" fill="#e8405e" stroke="#20141c" strokeWidth="1.500" />
                  </Marker>
                )}
              </PatternItem>
            ))}
          </PatternList>
          <SideScroll>
            <SideThumb aria-label="Scroll patterns"><ThumbMark /></SideThumb>
          </SideScroll>
        </Picker>
        <AddRow>
          <IconButton aria-label="Add pattern"><Plus size={16} /></IconButton>
        </AddRow>
      </Sidebar>

      <Playlist>
        <Toolbar>
          <AddTrack aria-label="Add track">
            <TabShape width="60" height="80" viewBox="0 0 60 80">
              <path d="M1 80 V72 L20 8 Q23 1 31 1 H60 V80Z" fill="#4f575e" stroke="#20282f" strokeWidth="2" />
              <path d="M3.500 79 V73 L22 9 Q25 3.500 31 3.500 H58.500 V79Z" fill="none" stroke="#656e75" strokeWidth="2" />
              <path d="M33 49H36V55.500H42V58.500H36V65H33V58.500H27V55.500H33Z" fill="#d5dbe0" stroke="#d5dbe0" />
            </TabShape>
          </AddTrack>
          <Tools>
            <IconButton aria-label="Focus on audio"><WaveIcon /></IconButton>
            <IconButton aria-label="Focus on automation" $dim="#727b80"><LinkIcon /></IconButton>
            <IconButton aria-label="Focus on patterns" $dim="#727b80"><PianoIcon /></IconButton>
            <IconButton aria-label="Auto crossfade"><CrossIcon /></IconButton>
            <IconButton aria-label="Curve" $dim="#687177"><CurveIcon /></IconButton>
            <IconButton aria-label="Stretch" $dim="#6d767b"><StretchIcon /></IconButton>
          </Tools>
          <Timeline>
            <ScrollRow>
              <BevelButton aria-label="Scroll left"><Chevron d="M12 3L7 10L12 17" /></BevelButton>
              <Track>
                <MapThumb><Overview /></MapThumb>
              </Track>
              <BevelButton aria-label="Scroll right"><Chevron d="M8 3L14 10L8 17" /></BevelButton>
            </ScrollRow>
            <Ruler>
              {Array.from({ length: 22 }, (_, i) => (
                <span key={i}>{i * 4 + 1}</span>
              ))}
              <Playhead width="13" height="20" viewBox="0 0 13 20">
                <path d="M-1 1H12V6L2 18L-1 19Z" fill="#a9dc6a" stroke="#1c2410" strokeWidth="1.500" />
                <path d="M0 3H10V6" fill="none" stroke="#eefcaa" strokeWidth="2" />
              </Playhead>
            </Ruler>
          </Timeline>
          <Corner>
            <BevelButton aria-label="Options"><Dot /></BevelButton>
            <BevelButton aria-label="Scroll up"><Chevron d="M3 13L10 6L17 13" /></BevelButton>
          </Corner>
        </Toolbar>

        <Content>
          <Rows>
            {tracks.map((t, i) => (
              <Row key={t.name} $h={t.height}>
                <Head $kind={t.kind}>
                  <TrackName $kind={t.kind} htmlFor={`track-${i}`}>{t.name}</TrackName>
                  {t.kind !== "muted" && <Dots />}
                  <Led id={`track-${i}`} type="checkbox" defaultChecked $kind={t.kind} />
                </Head>
                <Gutter />
                <Lane>
                  {t.clips.map((c, k) => (
                    <Clip key={k} clip={c} fill={t.kind === "solid"} />
                  ))}
                </Lane>
              </Row>
            ))}
          </Rows>
          <VScroll>
            <VThumb aria-label="Scroll tracks" />
            <BevelButton aria-label="Scroll down"><Chevron d="M3 7L10 14L17 7" /></BevelButton>
          </VScroll>
        </Content>
      </Playlist>
    </Page>
  );
}
